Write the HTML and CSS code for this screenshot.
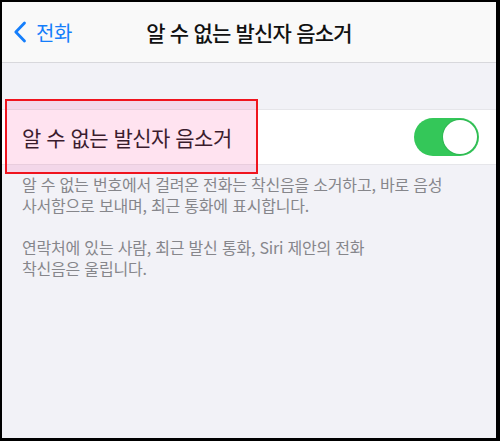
FILE: index.html
```html
<!DOCTYPE html>
<html lang="ko">
<head>
    <meta charset="UTF-8" />
    <meta name="viewport" content="width=device-width, initial-scale=1.0" />
    <title>알 수 없는 발신자 음소거</title>
    <link rel="stylesheet" href="styles.css">
</head>
<body>

    <div class="screen">
        <div class="nav-bar">
            <a class="back-link" href="#">
                <svg class="chevron" width="14" height="22" viewBox="0 0 14 22">
                    <path d="M11.5 2 L2.8 11 L11.5 20" fill="none" stroke="#157efb" stroke-width="2.8" stroke-linecap="round" stroke-linejoin="round" />
                </svg>
                <span>전화</span>
            </a>
            <h1 class="nav-title">알 수 없는 발신자 음소거</h1>
        </div>

        <div class="content">
            <div class="group">
                <div class="cell">
                    <span class="cell-label">알 수 없는 발신자 음소거</span>
                    <div class="switch on"><div class="knob"></div></div>
                </div>
                <div class="highlight"></div>
            </div>

            <div class="footer-text">
                <p>알 수 없는 번호에서 걸려온 전화는 착신음을 소거하고, 바로 음성<br>사서함으로 보내며, 최근 통화에 표시합니다.</p>
                <p>연락처에 있는 사람, 최근 발신 통화, Siri 제안의 전화<br>착신음은 울립니다.</p>
            </div>
        </div>
    </div>

</body>
</html>
```

FILE: styles.css
```css
* {
    box-sizing: border-box;
}

body {
    margin: 0;
    background-color: #000;
    font-family: "Noto Sans CJK KR", "Noto Sans", sans-serif;
}

.screen {
    width: 500px;
    height: 441px;
    border-style: solid;
    border-color: #000;
    border-width: 2px 4px 3px 2px;
    background-color: #f2f2f7;
    display: flex;
    flex-direction: column;
}

.nav-bar {
    height: 61px;
    background-color: #f9f9f9;
    border-bottom: 1px solid #d8d8dc;
    display: flex;
    align-items: center;
    position: relative;
}

.back-link {
    display: flex;
    align-items: center;
    gap: 9px;
    padding-left: 11px;
    color: #157efb;
    text-decoration: none;
    font-size: 20px;
    letter-spacing: -0.5px;
    z-index: 1;
}

.nav-title {
    position: absolute;
    left: 0;
    right: 0;
    margin: 0;
    text-align: center;
    font-size: 21px;
    font-weight: 500;
    letter-spacing: -0.8px;
    color: #111;
}

.content {
    flex: 1;
    padding-top: 46px;
}

.group {
    position: relative;
}

.cell {
    height: 56px;
    background-color: #fff;
    border-top: 1px solid #e6e6ea;
    border-bottom: 1px solid #e6e6ea;
    display: flex;
    align-items: center;
    justify-content: space-between;
    padding: 0 17px 0 20px;
}

.cell-label {
    font-size: 21px;
    letter-spacing: -0.5px;
    color: #1c1c1e;
}

.switch {
    width: 65px;
    height: 38px;
    border-radius: 19px;
    background-color: #e9e9eb;
    padding: 2px;
    display: flex;
}

.switch.on {
    background-color: #34c759;
    justify-content: flex-end;
}

.knob {
    width: 34px;
    height: 34px;
    border-radius: 50%;
    background-color: #fff;
    box-shadow: 0 0 0 1px #2fb852;
}

.highlight {
    position: absolute;
    left: 3px;
    top: -10px;
    width: 253px;
    height: 75px;
    border: 2px solid #f0141e;
    background-color: rgba(255, 40, 140, 0.13);
}

.footer-text {
    padding: 9px 20px 0 20px;
    color: #86868b;
    font-size: 16px;
    line-height: 21px;
    letter-spacing: -0.2px;
}

.footer-text p {
    margin: 0 0 21px 0;
}
```
